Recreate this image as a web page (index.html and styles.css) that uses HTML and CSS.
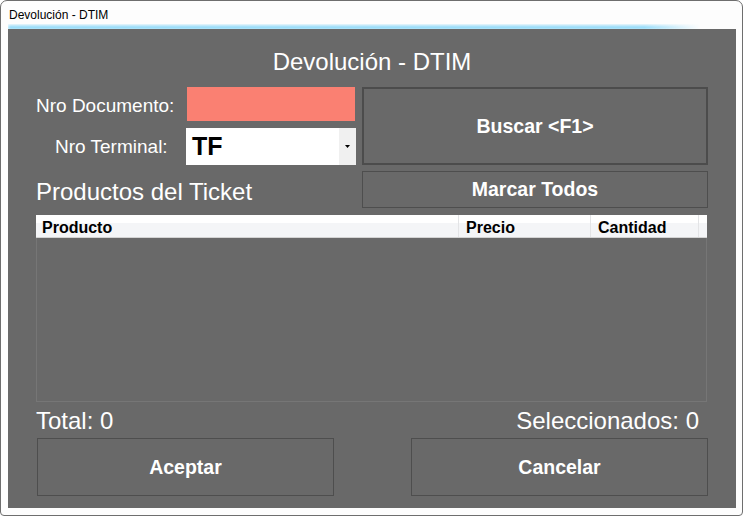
FILE: index.html
```html
<!DOCTYPE html>
<html lang="es">
<head>
    <meta charset="UTF-8">
    <meta name="viewport" content="width=device-width, initial-scale=1.0">
    <title>Devolución - DTIM</title>
    <link rel="stylesheet" href="styles.css">
</head>
<body>
    <div class="window">
        <div class="titlebar">Devolución - DTIM</div>

        <div class="client">
            <h1 class="form-title">Devolución - DTIM</h1>

            <div class="search-grid">
                <label class="field-label doc-label">Nro Documento:</label>
                <input class="doc-input" type="text">
                <button class="btn btn-search">Buscar &lt;F1&gt;</button>

                <label class="field-label terminal-label">Nro Terminal:</label>
                <div class="combo">
                    <span class="combo-value">TF</span>
                    <span class="combo-arrow">
                        <svg width="5" height="3" viewBox="0 0 5 3"><path d="M0 0H5L2.5 3Z" fill="#000"/></svg>
                    </span>
                </div>
            </div>

            <div class="products-bar">
                <span class="section-title">Productos del Ticket</span>
                <button class="btn btn-mark">Marcar Todos</button>
            </div>

            <div class="grid-table">
                <div class="grid-header">
                    <div class="col col-product">Producto</div>
                    <div class="col col-price">Precio</div>
                    <div class="col col-qty">Cantidad</div>
                    <div class="col col-fill"></div>
                </div>
                <div class="grid-body"></div>
            </div>

            <div class="totals">
                <span id="total">Total: 0</span>
                <span id="selected">Seleccionados: 0</span>
            </div>

            <div class="actions">
                <button class="btn btn-action btn-accept">Aceptar</button>
                <button class="btn btn-action">Cancelar</button>
            </div>
        </div>
    </div>
</body>
</html>
```

FILE: styles.css
```css
body {
    margin: 0;
    font-family: "Liberation Sans", Arial, sans-serif;
    background-color: #fff;
}
.window {
    width: 743px;
    height: 516px;
    box-sizing: border-box;
    border: 1px solid #6e6e6e;
    border-radius: 7px 7px 4px 4px;
    background-color: #fdfdfd;
    overflow: hidden;
}
.titlebar {
    height: 28px;
    padding-left: 8px;
    font-size: 12px;
    line-height: 28px;
    color: #000;
}
.client {
    position: relative;
    width: 728px;
    height: 479px;
    margin-left: 7px;
    box-sizing: border-box;
    padding: 19px 28px 0 28px;
    background-color: #696969;
    color: #fff;
}
/* glass glow under the caption */
.client::before {
    content: '';
    position: absolute;
    left: 0;
    top: -5px;
    width: 692px;
    height: 5px;
    background: linear-gradient(to bottom, rgba(150, 225, 255, 0), rgba(60, 190, 245, 0.95));
    filter: blur(1.5px);
    -webkit-mask-image: linear-gradient(to right, #000 92%, transparent);
}
.form-title {
    margin: 0;
    font-size: 24px;
    font-weight: normal;
    line-height: 28px;
    text-align: center;
}
.search-grid {
    display: grid;
    grid-template-columns: 151px 168px 1fr;
    grid-template-rows: 34px 37px;
    row-gap: 7px;
    margin-top: 11px;
}
.field-label {
    align-self: center;
    font-size: 19px;
    padding-top: 1px;
}
.doc-label {
    padding-top: 4px;
}
.terminal-label {
    padding-left: 19px;
}
.doc-input {
    border: none;
    margin: 0;
    padding: 0;
    background-color: #fa8072;
    height: 34px;
}
.btn {
    background-color: #696969;
    color: #fff;
    font-family: "Liberation Sans", Arial, sans-serif;
    font-size: 19.5px;
    font-weight: bold;
    border: 1px solid #4e4e4e;
    padding: 0;
    margin: 0;
    cursor: pointer;
}
.btn-search {
    grid-column: 3;
    grid-row: 1 / span 2;
    justify-self: end;
    width: 346px;
    border-width: 2px;
    border-color: #4c4c4c;
}
.combo {
    display: flex;
    width: 170px;
    height: 37px;
    margin-left: -1px;
    background-color: #fff;
}
.combo-value {
    flex: 1;
    padding-left: 6px;
    color: #000;
    font-size: 25px;
    font-weight: bold;
    line-height: 37px;
}
.combo-arrow {
    width: 17px;
    background-color: #f0f0f0;
    display: flex;
    align-items: center;
    justify-content: center;
}
.products-bar {
    display: flex;
    justify-content: space-between;
    align-items: center;
    margin-top: 6px;
    height: 37px;
}
.section-title {
    font-size: 24px;
    margin-top: 4px;
}
.btn-mark {
    width: 346px;
    height: 37px;
}
.grid-table {
    width: 671px;
    margin-top: 7px;
}
.grid-header {
    display: flex;
    height: 22px;
    background: linear-gradient(to bottom, #fff 0, #fff 35%, #f4f5f7 35%, #f4f5f7 100%);
    border-bottom: 1px solid #d3d3d3;
    color: #000;
    font-size: 16px;
    font-weight: bold;
    line-height: 25px;
}
.col {
    box-sizing: border-box;
    border-right: 1px solid #e3e4e6;
    padding-left: 7px;
}
.col-product {
    width: 423px;
    padding-left: 6px;
}
.col-price {
    width: 132px;
}
.col-qty {
    width: 108px;
}
.col-fill {
    flex: 1;
    border-right: none;
}
.grid-body {
    height: 163px;
    border: 1px solid #767676;
    border-top: none;
}
.totals {
    display: flex;
    justify-content: space-between;
    margin-top: 5px;
    padding-right: 9px;
    font-size: 24px;
    line-height: 28px;
    height: 27px;
}
.actions {
    display: flex;
    justify-content: space-between;
    margin-top: 4px;
}
.btn-action {
    width: 297px;
    height: 58px;
}
.btn-accept {
    margin-left: 1px;
}
```
